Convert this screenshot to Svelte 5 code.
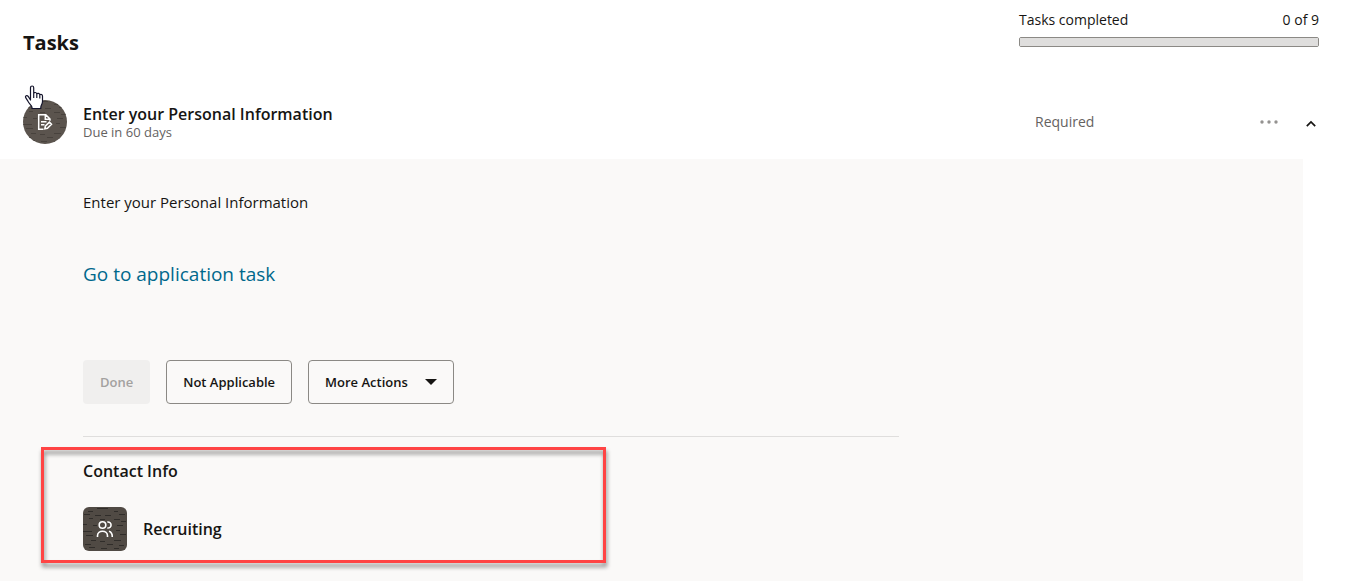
<script lang="ts">
    const completed = 0;
    const total = 9;

    let expanded = $state(true);

    // short wood-grain strokes drawn behind the icons: x, y, length
    const grain = [
        [5, 4, 5], [14, 1, 11], [31, 4, 4], [36, 7, 6], [1, 7, 6], [12, 8, 6], [22, 8, 6],
        [6, 11, 4], [17, 12, 5], [31, 12, 6], [38, 14, 5], [0, 17, 4], [10, 18, 4], [34, 18, 6],
        [0, 24, 9], [33, 23, 4], [3, 28, 7], [37, 27, 6], [8, 33, 5], [17, 34, 5], [31, 33, 7],
        [2, 37, 6], [24, 37, 6], [36, 38, 5], [6, 40, 6], [18, 41, 6], [31, 41, 5]
    ];
</script>

{#snippet texture(color: string)}
    <g stroke={color} stroke-width="1">
        {#each grain as [x, y, length]}
            <path d={`M${x} ${y}.5h${length}`} fill="none" />
        {/each}
    </g>
{/snippet}

<main class="page">
    <header class="header">
        <h1>Tasks</h1>
        <div class="status">
            <div class="status_text">
                <label for="progress">Tasks completed</label>
                <span>{completed} of {total}</span>
            </div>
            <progress id="progress" value={completed} max={total}></progress>
        </div>
    </header>

    <section class="task">
        <div class="task_icon">
            <svg class="avatar round" viewBox="0 0 44 44" aria-hidden="true">
                <rect width="44" height="44" fill="#5b544e" />
                {@render texture("#48423d")}
                <g fill="none" stroke="#fff" stroke-width="1.5">
                    <path d="M20.500 29.200h-4.800V14.800h7.100l4.200 4.200v1.800M22.300 15v4.300h4.500M18 21.700h5.500M18 24.700h3.500" />
                    <path d="M21.800 28.800l.5-2.700 4.100-4 2.100 2.100-4.100 4z" />
                </g>
            </svg>
            <svg class="pointer" viewBox="0 0 20 25" aria-hidden="true">
                <path d="M6.5 15V2.700c0-2.300 3.200-2.300 3.200 0v5.800c.4-1.500 3-1.300 3.100.5.6-1.200 2.900-.8 3 .8 1-.9 2.700-.2 2.700 1.400v5.300c0 2.700-1.700 3.800-1.700 5.800v1.200H8v-1.300c0-1.500-3.200-3.800-4.100-6.100L1.700 12.700c-.9-1.800 1.300-2.800 2.500-1.300zM9.700 8v5M12.800 9v4M15.800 10v3.500" fill="#fff" stroke="#14142b" stroke-width="1.2" stroke-linejoin="round" />
            </svg>
        </div>
        <div class="task_name">
            <h2>Enter your Personal Information</h2>
            <p>Due in 60 days</p>
        </div>
        <span class="required">Required</span>
        <div class="task_tools">
            <button class="icon_button" aria-label="Task actions">
                <svg width="20" height="20" viewBox="0 0 20 20" fill="#949290">
                    <circle cx="3" cy="10" r="1.7" />
                    <circle cx="10" cy="10" r="1.7" />
                    <circle cx="17" cy="10" r="1.7" />
                </svg>
            </button>
            <button class="icon_button" aria-label="Toggle details" aria-expanded={expanded} onclick={() => (expanded = !expanded)}>
                <svg class:closed={!expanded} width="20" height="20" viewBox="0 0 20 20">
                    <path d="M5.8 14.2L10 10l4.2 4.2" fill="none" stroke="#161513" stroke-width="1.7" />
                </svg>
            </button>
        </div>
    </section>

    {#if expanded}
        <section class="details">
            <p class="description">Enter your Personal Information</p>
            <a class="task_link" href="#application">Go to application task</a>

            <div class="actions">
                <button class="action" disabled>Done</button>
                <button class="action">Not Applicable</button>
                <button class="action" aria-haspopup="menu">
                    More Actions
                    <svg width="12" height="6" viewBox="0 0 12 6" aria-hidden="true"><path d="M0 0h12L6 6z" fill="#161513" /></svg>
                </button>
            </div>

            <div class="contact">
                <h3>Contact Info</h3>
                <div class="contact_row">
                    <svg class="avatar" viewBox="0 0 44 44" aria-hidden="true">
                        <rect width="44" height="44" fill="#504a44" />
                        {@render texture("#302d2a")}
                        <g fill="none" stroke="#fff" stroke-width="1.6">
                            <circle cx="19.5" cy="18" r="3.3" />
                            <path d="M14.5 30v-1.200c0-6.100 10-6.100 10 0V30M24.300 15c5-.7 5 6.600 0 6M26 24.300c2.300.7 3.300 2.500 3.300 5.700" />
                        </g>
                    </svg>
                    <strong>Recruiting</strong>
                </div>
                <div class="highlight"></div>
            </div>
        </section>
    {/if}
</main>

<style>
    :global(body) {
        margin: 0;
        background: #fff;
    }

    .page {
        display: flex;
        flex-direction: column;
        min-height: 100vh;
        color: #161513;
        font-family: "Open Sans", "Noto Sans", sans-serif;
        font-size: 16px;
        line-height: 20px;
    }

    h1, h2, h3, p {
        margin: 0;
    }

    .header {
        display: flex;
        justify-content: space-between;
        padding: 10px 28px 0 23px;
    }

    h1 {
        padding-top: 20px;
        font-size: 20px;
        line-height: 26px;
        font-weight: 700;
    }

    .status {
        width: 300px;
    }

    .status_text {
        display: flex;
        justify-content: space-between;
        font-size: 14px;
        font-weight: 500;
    }

    progress {
        display: block;
        box-sizing: border-box;
        width: 100%;
        height: 10px;
        margin-top: 7px;
        border: 1px solid #8b8985;
        border-radius: 2px;
        background: #dfdedd;
        appearance: none;
        overflow: hidden;
    }

    progress::-webkit-progress-bar {
        background: #dfdedd;
    }

    progress::-webkit-progress-value {
        background: #161513;
    }

    .task {
        display: flex;
        align-items: center;
        padding: 44px 25px 15px 23px;
    }

    .task_icon {
        position: relative;
        height: 44px;
    }

    .avatar {
        display: block;
        flex: none;
        width: 44px;
        height: 44px;
        border-radius: 6px;
    }

    .avatar.round {
        border-radius: 50%;
    }

    .pointer {
        position: absolute;
        top: -15px;
        left: 1px;
        width: 20px;
        height: 25px;
    }

    .task_name {
        flex: 1;
        padding-left: 16px;
    }

    h2, h3, strong {
        font-size: 16px;
        line-height: 20px;
        font-weight: 600;
    }

    .task_name p {
        color: #65625f;
        font-size: 13px;
        line-height: 16px;
    }

    .required {
        width: 223px;
        color: #65625f;
        font-size: 14px;
    }

    .task_tools {
        display: flex;
        gap: 20px;
    }

    .icon_button {
        width: 22px;
        height: 22px;
        padding: 1px;
        border: 0;
        background: none;
    }

    .icon_button svg {
        display: block;
    }

    .icon_button .closed {
        transform: rotate(180deg);
    }

    .details {
        flex: 1;
        margin-right: 44px;
        padding: 33px 0 30px 83px;
        background: #faf9f8;
    }

    .description {
        font-size: 15px;
    }

    .task_link {
        display: inline-block;
        margin-top: 48px;
        color: #00688c;
        font-size: 19px;
        line-height: 28px;
        text-decoration: none;
    }

    .actions {
        display: flex;
        gap: 16px;
        margin-top: 72px;
    }

    .action {
        display: flex;
        align-items: center;
        gap: 17px;
        height: 44px;
        padding: 0 16px;
        border: 1px solid #8b8985;
        border-radius: 4px;
        background: transparent;
        color: #161513;
        font-family: inherit;
        font-size: 13px;
        font-weight: 600;
    }

    .action:disabled {
        border-color: transparent;
        background: #f0efee;
        color: #a3a19f;
    }

    .contact {
        position: relative;
        max-width: 816px;
        margin-top: 32px;
        padding-top: 24px;
        border-top: 1px solid #dfdedd;
    }

    .contact_row {
        display: flex;
        align-items: center;
        gap: 16px;
        margin-top: 26px;
    }

    /* callout frame over the contact block */
    .highlight {
        position: absolute;
        top: 10px;
        left: -42px;
        box-sizing: border-box;
        width: 565px;
        height: 116px;
        border: 3px solid #ff4444;
        filter: drop-shadow(1px 4px 2px rgba(0, 0, 0, 0.45));
        pointer-events: none;
    }
</style>
